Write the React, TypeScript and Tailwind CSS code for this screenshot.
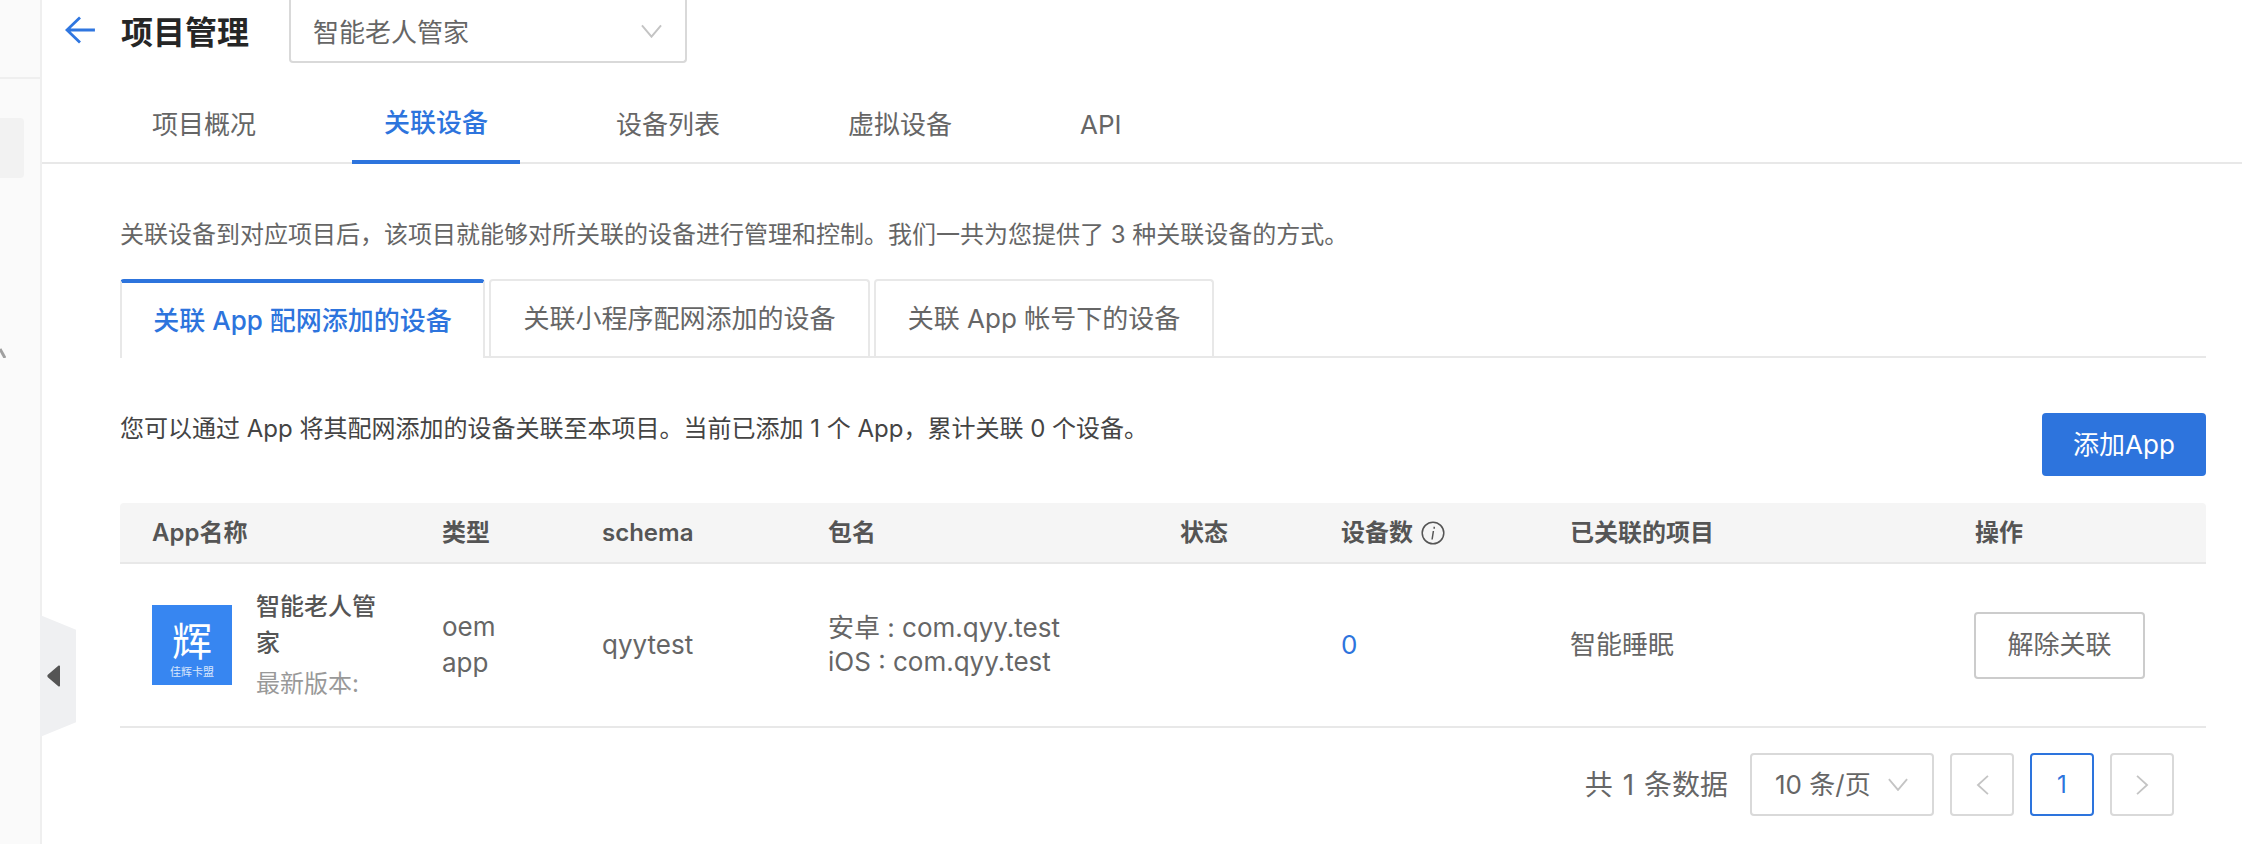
const font = "font-['Inter','Noto_Sans_CJK_SC',sans-serif]";

const topTabs = ["项目概况", "关联设备", "设备列表", "虚拟设备", "API"];

// column widths shared by table head and row
const cols = "grid grid-cols-[290px_160px_226px_352px_161px_229px_405px_1fr]";

function Chevron({ className }: { className: string }) {
  return (
    <svg viewBox="0 0 22 14" fill="none" stroke="#c4c4c4" strokeWidth="2" className={className}>
      <path d="M1 1l10 12L21 1" />
    </svg>
  );
}

function Sidebar() {
  return (
    <aside className="relative w-[42px] shrink-0 border-r-2 border-[#efefef] bg-[#fafafa]">
      <div className="h-[79px] border-b-2 border-[#efefef]" />
      <div className="mt-[39px] h-[60px] w-[24px] rounded-r bg-[#f2f2f2]" />
      <svg viewBox="0 0 6 10" fill="none" stroke="#a0a0a0" strokeWidth="3" className="mt-[170px] h-[10px] w-[6px]">
        <path d="M0 1l5 9" />
      </svg>
      {/* collapse handle sits over the sidebar edge */}
      <div className="absolute left-[40px] top-[615px] flex h-[122px] w-[36px] items-center bg-[#eff0f2] pl-[7px] [clip-path:polygon(0_0,100%_12%,100%_88%,0_100%)]">
        <svg viewBox="0 0 14 22" className="h-[22px] w-[14px]" fill="#555">
          <path d="M13 1.5v19c0 1-1 1.300-1.700.7L.8 12.200c-.6-.6-.6-1.800 0-2.400L11.300.8C12 .2 13 .5 13 1.500z" />
        </svg>
      </div>
    </aside>
  );
}

function AppLogo() {
  return (
    <div className="flex h-[80px] w-[80px] shrink-0 flex-col items-center bg-[#3786f1] text-white">
      <span className="mt-[12px] text-[40px] leading-[44px] font-['Noto_Sans_CJK_SC',sans-serif]">辉</span>
      <span className="mt-[5px] text-[11px] leading-[12px] opacity-80">佳辉卡盟</span>
    </div>
  );
}

export default function App() {
  return (
    <div className={`flex h-[844px] w-[2242px] overflow-hidden bg-white text-[#666] ${font}`}>
      <Sidebar />
      <main className="min-w-0 flex-1">
        {/* header */}
        <div className="flex h-[63px] items-start">
          <svg viewBox="0 0 32 30" fill="none" stroke="#2f76e0" strokeWidth="3" className="ml-[23px] mt-[16px] h-[28px] w-[30px]">
            <path d="M16 1.500L2 15l14 13.500M2 15h30" />
          </svg>
          <h1 className="ml-[26px] mt-[16px] text-[32px] leading-[34px] font-semibold text-[#262626]">项目管理</h1>
          <div className="ml-[40px] flex h-[63px] w-[398px] items-center justify-between rounded-b border-2 border-t-0 border-[#d9d9d9] pl-[22px] pr-[23px] text-[26px]">
            <span className="mt-[3px]">智能老人管家</span>
            <Chevron className="h-[14px] w-[21px]" />
          </div>
        </div>

        {/* top tabs */}
        <nav className="flex h-[101px] items-end gap-[64px] border-b-2 border-[#e8e8e8] pl-[78px] text-[26px]">
          {topTabs.map((tab) =>
            tab === "关联设备" ? (
              <div key={tab} className="-mb-[2px] border-b-4 border-[#2d74dd] px-[32px] pb-[19px] leading-[36px] font-medium text-[#2d74dd]">
                {tab}
              </div>
            ) : (
              <div key={tab} className="px-[32px] pb-[19px] leading-[36px] text-[#666]">
                {tab}
              </div>
            ),
          )}
        </nav>

        <div className="pl-[78px] pr-[36px]">
          <p className="mt-[54px] text-[24px] leading-[34px]">
            关联设备到对应项目后，该项目就能够对所关联的设备进行管理和控制。我们一共为您提供了 3 种关联设备的方式。
          </p>

          {/* sub tabs */}
          <div className="mt-[27px] flex h-[79px] items-stretch gap-[4px] border-b-2 border-[#e8e8e8] text-[26px]">
            <div className="-mb-[2px] flex w-[365px] items-center justify-center rounded-t border-x-2 border-t-4 border-x-[#e8e8e8] border-t-[#2d74dd] bg-white font-medium text-[#2d74dd]">
              关联 App 配网添加的设备
            </div>
            <div className="flex w-[381px] items-center justify-center rounded-t border-2 border-b-0 border-[#e8e8e8]">
              关联小程序配网添加的设备
            </div>
            <div className="flex w-[340px] items-center justify-center rounded-t border-2 border-b-0 border-[#e8e8e8]">
              关联 App 帐号下的设备
            </div>
          </div>

          {/* summary + add button */}
          <div className="mt-[55px] flex h-[63px] items-start justify-between">
            <p className="-mt-[2px] text-[24px] leading-[36px] text-[#444]">
              您可以通过 App 将其配网添加的设备关联至本项目。当前已添加 1 个 App，累计关联 0 个设备。
            </p>
            <button className="h-[63px] w-[164px] rounded bg-[#2d74dd] text-[26px] text-white">添加App</button>
          </div>

          {/* table */}
          <div className="mt-[27px]">
            <div className={`${cols} h-[61px] items-center rounded-t border-b-2 border-[#e8e8e8] bg-[#f5f5f5] text-[24px] font-semibold text-[#555]`}>
              <div className="pl-[32px]">App名称</div>
              <div className="pl-[32px]">类型</div>
              <div className="pl-[32px]">schema</div>
              <div className="pl-[32px]">包名</div>
              <div className="pl-[32px]">状态</div>
              <div className="flex items-center gap-[8px] pl-[32px]">
                设备数
                <svg viewBox="0 0 24 24" fill="none" stroke="#555" strokeWidth="1.500" className="h-[24px] w-[24px]">
                  <circle cx="12" cy="12" r="10.800" />
                  <path d="M13.200 5.800v2M12.400 10l-1.300 8.500" />
                </svg>
              </div>
              <div className="pl-[32px]">已关联的项目</div>
              <div className="pl-[32px]">操作</div>
            </div>

            <div className={`${cols} h-[164px] items-center border-b-2 border-[#e8e8e8] text-[26px] leading-[36px]`}>
              <div className="flex items-center gap-[25px] pl-[32px]">
                <AppLogo />
                <div className="w-[124px] text-[24px]">
                  <div className="-ml-px font-medium text-[#555]">智能老人管家</div>
                  <div className="mt-[5px] -ml-px text-[#999]">最新版本:</div>
                </div>
              </div>
              <div className="w-[90px] pl-[32px]">oem app</div>
              <div className="pl-[32px]">qyytest</div>
              <div className="pl-[32px] leading-[34px]">
                <div>安卓 : com.qyy.test</div>
                <div>iOS : com.qyy.test</div>
              </div>
              <div />
              <div className="pl-[32px] text-[#2d74dd]">0</div>
              <div className="pl-[32px]">智能睡眠</div>
              <div className="pl-[31px]">
                <button className="h-[67px] w-[171px] rounded border-2 border-[#ccc] bg-white">解除关联</button>
              </div>
            </div>
          </div>

          {/* pagination */}
          <div className="mt-[25px] flex items-center justify-end pr-[32px] text-[26px]">
            <span className="mr-[22px] text-[28px] [word-spacing:2px]">共 1 条数据</span>
            <div className="flex h-[63px] w-[184px] items-center justify-between rounded border-2 border-[#d9d9d9] pl-[23px] pr-[24px]">
              <span>10 条/页</span>
              <Chevron className="h-[13px] w-[20px]" />
            </div>
            <button className="ml-[16px] flex h-[63px] w-[64px] items-center justify-center rounded border-2 border-[#d9d9d9]">
              <svg viewBox="0 0 14 22" fill="none" stroke="#c4c4c4" strokeWidth="2" className="h-[20px] w-[13px]">
                <path d="M13 1L2 11l11 10" />
              </svg>
            </button>
            <button className="ml-[16px] h-[63px] w-[64px] rounded border-2 border-[#2d74dd] text-[24px] text-[#2d74dd]">1</button>
            <button className="ml-[16px] flex h-[63px] w-[64px] items-center justify-center rounded border-2 border-[#d9d9d9]">
              <svg viewBox="0 0 14 22" fill="none" stroke="#c4c4c4" strokeWidth="2" className="h-[20px] w-[13px]">
                <path d="M1 1l11 10L1 21" />
              </svg>
            </button>
          </div>
        </div>
      </main>
    </div>
  );
}
